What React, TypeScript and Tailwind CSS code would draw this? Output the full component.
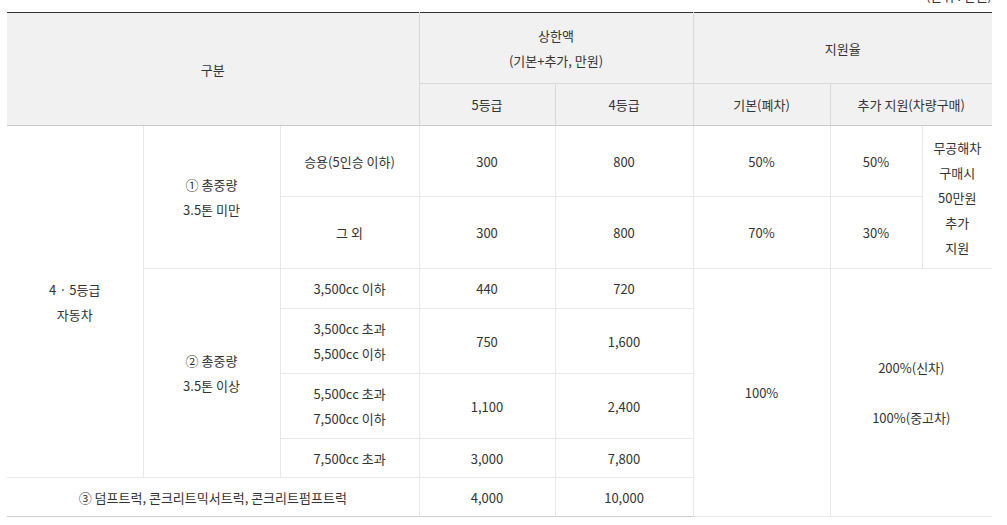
import React from "react";

const th = "border border-[#d9d9d9] bg-[#f1f1f1] font-normal text-center align-middle px-2";
const td = "border border-[#e8e8e8] text-center align-middle px-2";

export default function App() {
  return (
    <div className="w-[1007px] h-[525px] overflow-hidden bg-white text-[13px] leading-[25px] text-[#333] [font-family:'Noto_Sans_CJK_KR','Noto_Sans',sans-serif]">
      <div className="ml-[7px] w-[985px]">
        <p className="-mt-[17px] h-[29px] text-right leading-[25px]">(단위 : 만원)</p>
        <table className="w-[985px] table-fixed border-collapse border-t border-t-[#333] border-b border-b-[#cccccc] [&_th:first-child]:border-l-0 [&_td:first-child]:border-l-0 [&_th:last-child]:border-r-0 [&_td:last-child]:border-r-0">
          <colgroup>
            <col className="w-[136px]" />
            <col className="w-[137px]" />
            <col className="w-[139px]" />
            <col className="w-[136px]" />
            <col className="w-[138px]" />
            <col className="w-[137px]" />
            <col className="w-[92px]" />
            <col className="w-[70px]" />
          </colgroup>
          <thead>
            <tr className="h-[71px]">
              <th colSpan={3} rowSpan={2} className={th + " border-t-[#333] border-b-[#cccccc]"}>
                구분
              </th>
              <th colSpan={2} className={th + " border-t-[#333]"}>
                상한액
                <br />
                (기본+추가, 만원)
              </th>
              <th colSpan={3} className={th + " border-t-[#333]"}>
                지원율
              </th>
            </tr>
            <tr className="h-[42px]">
              <th className={th + " border-b-[#cccccc]"}>5등급</th>
              <th className={th + " border-b-[#cccccc]"}>4등급</th>
              <th className={th + " border-b-[#cccccc]"}>기본(폐차)</th>
              <th colSpan={2} className={th + " border-b-[#cccccc]"}>
                추가 지원(차량구매)
              </th>
            </tr>
          </thead>
          <tbody>
            <tr className="h-[71px]">
              <td rowSpan={6} className={td}>
                4 · 5등급
                <br />
                자동차
              </td>
              <td rowSpan={2} className={td}>
                ① 총중량
                <br />
                3.5톤 미만
              </td>
              <td className={td}>승용(5인승 이하)</td>
              <td className={td}>300</td>
              <td className={td}>800</td>
              <td className={td}>50%</td>
              <td className={td}>50%</td>
              <td rowSpan={2} className={td + " px-0"}>
                무공해차
                <br />
                구매시
                <br />
                50만원
                <br />
                추가
                <br />
                지원
              </td>
            </tr>
            <tr className="h-[72px]">
              <td className={td}>그 외</td>
              <td className={td}>300</td>
              <td className={td}>800</td>
              <td className={td}>70%</td>
              <td className={td}>30%</td>
            </tr>
            <tr className="h-[40px]">
              <td rowSpan={4} className={td}>
                ② 총중량
                <br />
                3.5톤 이상
              </td>
              <td className={td}>3,500cc 이하</td>
              <td className={td}>440</td>
              <td className={td}>720</td>
              <td rowSpan={5} className={td}>
                100%
              </td>
              <td rowSpan={5} colSpan={2} className={td}>
                200%(신차)
                <br />
                <br />
                100%(중고차)
              </td>
            </tr>
            <tr className="h-[65px]">
              <td className={td}>
                3,500cc 초과
                <br />
                5,500cc 이하
              </td>
              <td className={td}>750</td>
              <td className={td}>1,600</td>
            </tr>
            <tr className="h-[65px]">
              <td className={td}>
                5,500cc 초과
                <br />
                7,500cc 이하
              </td>
              <td className={td}>1,100</td>
              <td className={td}>2,400</td>
            </tr>
            <tr className="h-[39px]">
              <td className={td}>7,500cc 초과</td>
              <td className={td}>3,000</td>
              <td className={td}>7,800</td>
            </tr>
            <tr className="h-[39px]">
              <td colSpan={3} className={td + " border-b-[#cccccc]"}>
                ③ 덤프트럭, 콘크리트믹서트럭, 콘크리트펌프트럭
              </td>
              <td className={td + " border-b-[#cccccc]"}>4,000</td>
              <td className={td + " border-b-[#cccccc]"}>10,000</td>
            </tr>
          </tbody>
        </table>
      </div>
    </div>
  );
}
